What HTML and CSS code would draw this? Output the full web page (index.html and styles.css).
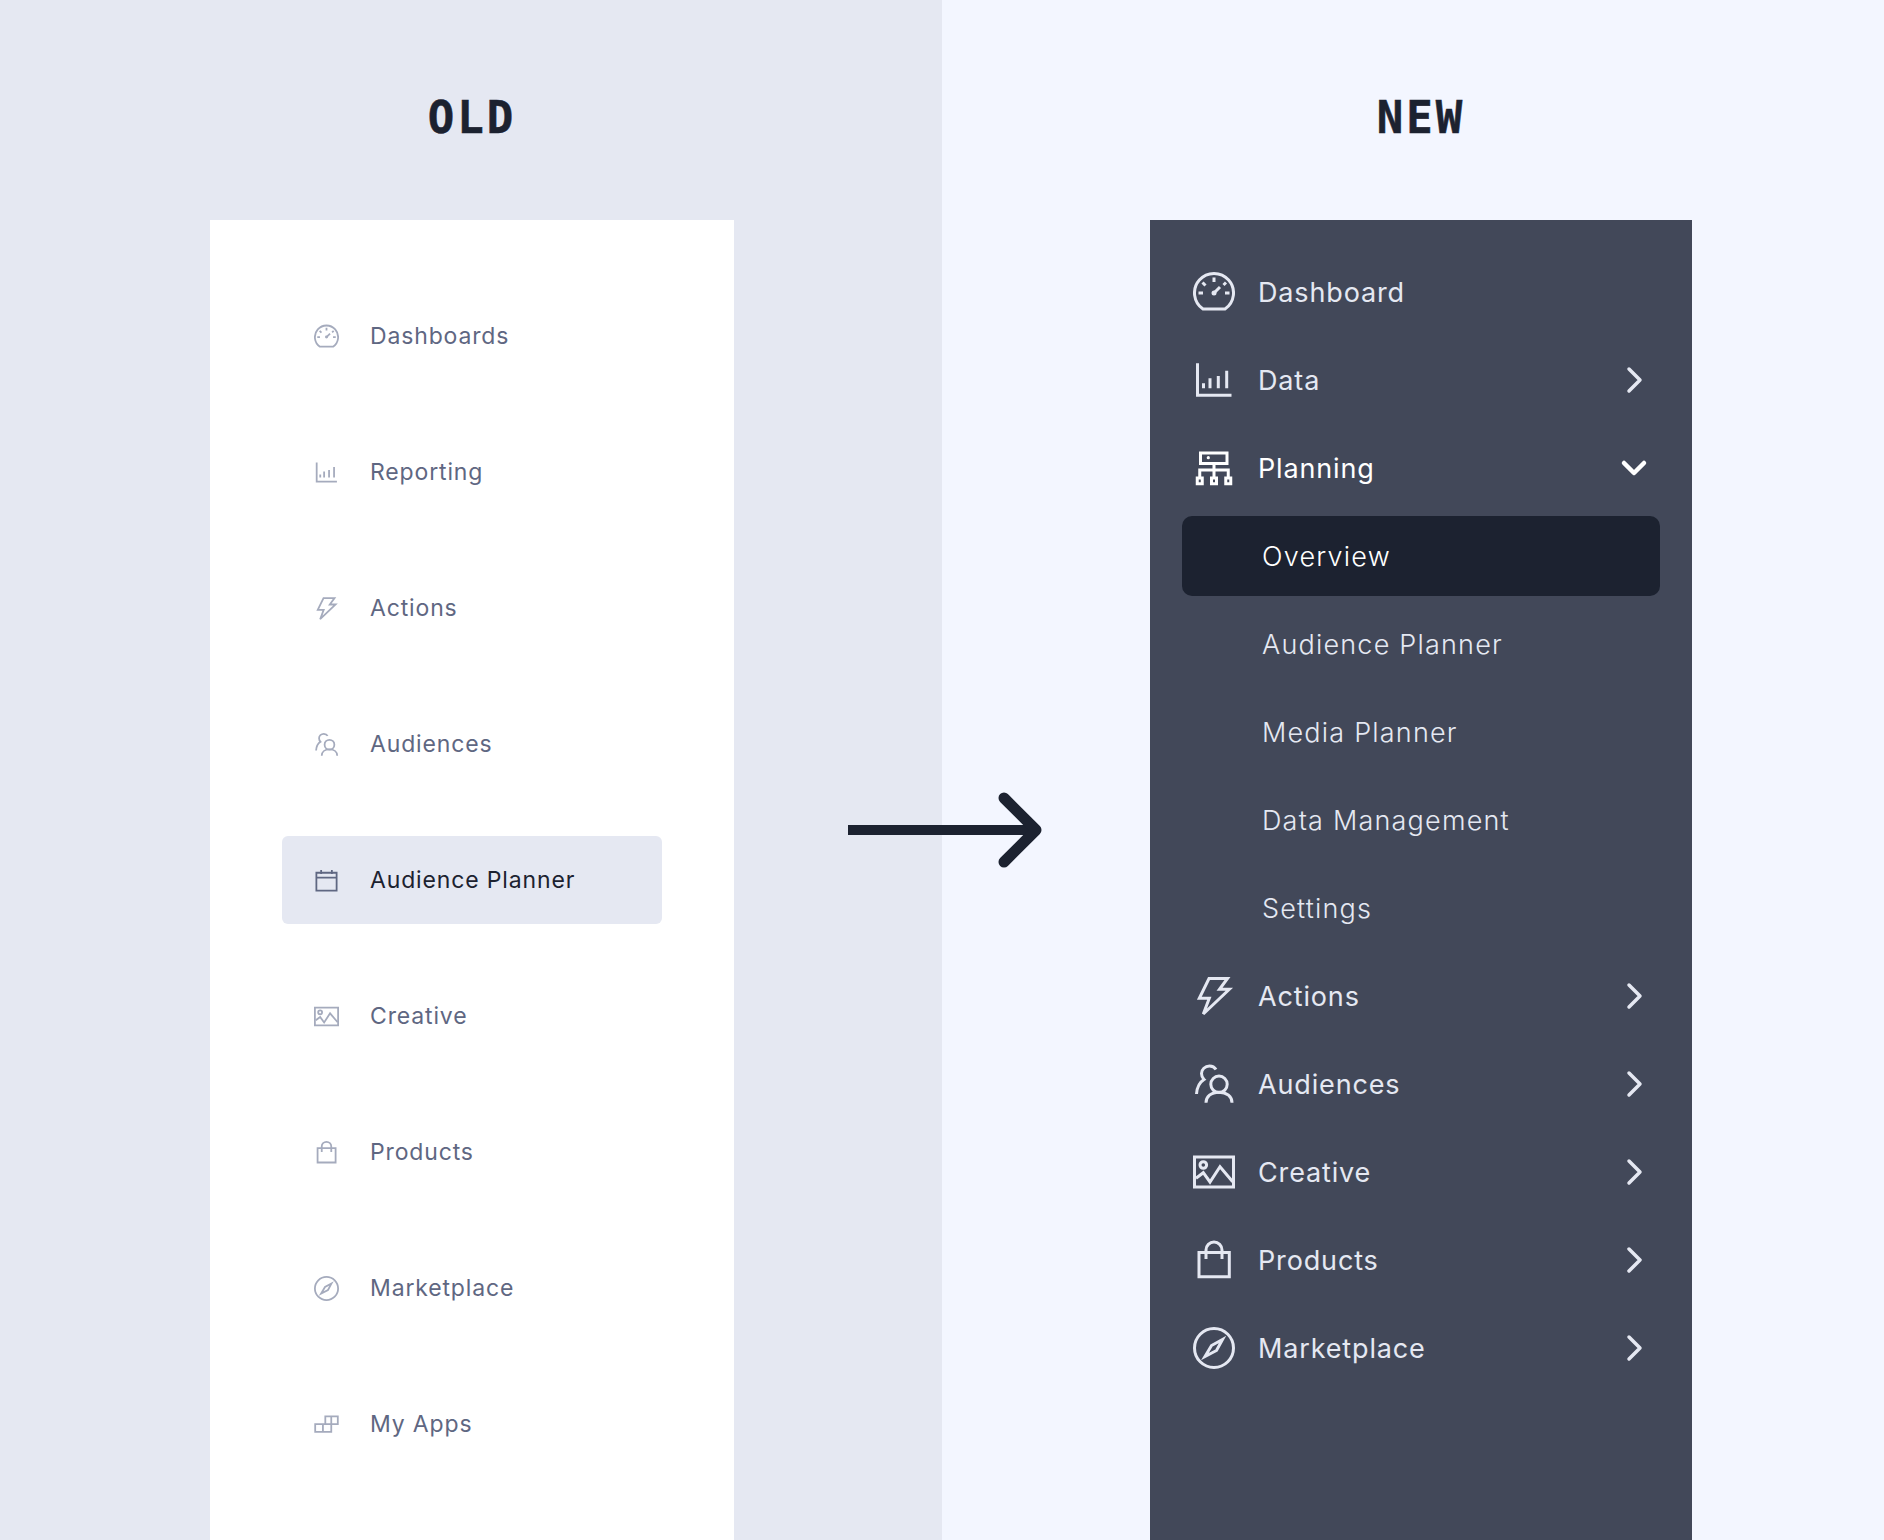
FILE: index.html
```html
<!DOCTYPE html>
<html lang="en">
<head>
    <meta charset="UTF-8">
    <title>Old vs New navigation</title>
    <link rel="stylesheet" href="styles.css">
</head>
<body>
    <svg class="sprite" xmlns="http://www.w3.org/2000/svg">
        <symbol id="i-gauge" viewBox="0 0 42 42">
            <g transform="translate(0 1)">
                <path d="M10 37.1h22a19.5 19.5 0 1 0-22 0z"/>
                <path class="thin" d="M21 5.500v4.500M5.500 21h4.500M32 21h4.500M9.500 10.500l3 3M33 10.500l-2.500 2.500M21 21l6-6"/>
                <circle class="dot" cx="21" cy="21" r="2.500"/>
            </g>
        </symbol>
        <symbol id="i-chart" viewBox="0 0 42 42">
            <path d="M4.500 4.300v32h34"/>
            <path d="M10.500 29.300v-5M17 29.300v-10M25.300 29.300V17M33.700 29.300V11.700"/>
        </symbol>
        <symbol id="i-org" viewBox="0 0 42 42">
            <path class="thin" d="M7.500 6h26.500v10.500H7.500zM21 16.500V31M6.750 31v-8h28.500v8M4.250 31h5v5.750h-5zM18.500 31h5v5.750h-5zM32.750 31h5v5.750h-5z"/>
            <circle class="dot" cx="15.300" cy="10.700" r="1.600"/>
        </symbol>
        <symbol id="i-bolt" viewBox="0 0 42 42">
            <path class="thin" d="M16 3.500h18.500L26.500 14.300h9.800L10.300 39l6-15.700H6.300z"/>
        </symbol>
        <symbol id="i-people" viewBox="0 0 42 42">
            <circle class="thin" cx="26" cy="21.300" r="8.200"/>
            <path class="thin" d="M13 39.700c0-6 5-10.500 13-10.500s13 4.500 13 10.500"/>
            <path class="thin" d="M23 6.500C21.500 4 19 3 16.500 3 12 3 8.500 6.500 8.500 10.500c0 2.500 1 4.500 2.500 6C7 19 4 24 3.500 31"/>
        </symbol>
        <symbol id="i-image" viewBox="0 0 42 42">
            <path d="M1.500 6h39v30h-39z"/>
            <circle class="thin" cx="10.300" cy="14" r="3.300"/>
            <path class="thin" d="M3 27.300l7.300-5.600L17 31l10-15.300L39.700 30.700"/>
        </symbol>
        <symbol id="i-bag" viewBox="0 0 42 42">
            <path d="M6 13.500h30.300v24.300H6zM13 20V11a8 8 0 0 1 16 0v9"/>
        </symbol>
        <symbol id="i-compass" viewBox="0 0 42 42">
            <circle cx="21" cy="21" r="19.500"/>
            <path class="thin" d="M29.500 12.500L23.500 23.500 12 29.500l6.500-11z"/>
        </symbol>
        <symbol id="i-calendar" viewBox="0 0 42 42">
            <path d="M4 8h34v30H4zM4 16h34M12 3.500V10M30 3.500V10"/>
        </symbol>
        <symbol id="i-apps" viewBox="0 0 42 42">
            <path class="thin" d="M19 7.500h21v13H19zM29 7.500v13M2 20.500h27v13H2zM15 20.500v13"/>
        </symbol>
    </svg>

    <section class="panel panel-old">
        <h1 class="panel-title">OLD</h1>
        <nav class="card card-old">
            <a class="old-row"><svg class="old-icon"><use href="#i-gauge"/></svg>Dashboards</a>
            <a class="old-row"><svg class="old-icon"><use href="#i-chart"/></svg>Reporting</a>
            <a class="old-row"><svg class="old-icon"><use href="#i-bolt"/></svg>Actions</a>
            <a class="old-row"><svg class="old-icon"><use href="#i-people"/></svg>Audiences</a>
            <a class="old-row active"><svg class="old-icon"><use href="#i-calendar"/></svg>Audience Planner</a>
            <a class="old-row"><svg class="old-icon"><use href="#i-image"/></svg>Creative</a>
            <a class="old-row"><svg class="old-icon"><use href="#i-bag"/></svg>Products</a>
            <a class="old-row"><svg class="old-icon"><use href="#i-compass"/></svg>Marketplace</a>
            <a class="old-row"><svg class="old-icon"><use href="#i-apps"/></svg>My Apps</a>
        </nav>
    </section>

    <section class="panel panel-new">
        <h1 class="panel-title">NEW</h1>
        <nav class="card card-new">
            <a class="new-row"><svg class="new-icon"><use href="#i-gauge"/></svg><span class="new-label">Dashboard</span></a>
            <a class="new-row"><svg class="new-icon"><use href="#i-chart"/></svg><span class="new-label">Data</span><svg class="chevron" viewBox="0 0 30 30"><path d="M9 4l11 11L9 26"/></svg></a>
            <a class="new-row open"><svg class="new-icon"><use href="#i-org"/></svg><span class="new-label">Planning</span><svg class="chevron" viewBox="0 0 30 30"><path d="M4 10l10 10 10-10"/></svg></a>
            <a class="sub-row current">Overview</a>
            <a class="sub-row">Audience Planner</a>
            <a class="sub-row">Media Planner</a>
            <a class="sub-row">Data Management</a>
            <a class="sub-row">Settings</a>
            <a class="new-row"><svg class="new-icon"><use href="#i-bolt"/></svg><span class="new-label">Actions</span><svg class="chevron" viewBox="0 0 30 30"><path d="M9 4l11 11L9 26"/></svg></a>
            <a class="new-row"><svg class="new-icon"><use href="#i-people"/></svg><span class="new-label">Audiences</span><svg class="chevron" viewBox="0 0 30 30"><path d="M9 4l11 11L9 26"/></svg></a>
            <a class="new-row"><svg class="new-icon"><use href="#i-image"/></svg><span class="new-label">Creative</span><svg class="chevron" viewBox="0 0 30 30"><path d="M9 4l11 11L9 26"/></svg></a>
            <a class="new-row"><svg class="new-icon"><use href="#i-bag"/></svg><span class="new-label">Products</span><svg class="chevron" viewBox="0 0 30 30"><path d="M9 4l11 11L9 26"/></svg></a>
            <a class="new-row"><svg class="new-icon"><use href="#i-compass"/></svg><span class="new-label">Marketplace</span><svg class="chevron" viewBox="0 0 30 30"><path d="M9 4l11 11L9 26"/></svg></a>
        </nav>
    </section>

    <svg class="arrow" viewBox="0 0 200 80"><path d="M0 40h184"/><path class="arrow-head" d="M156 8l32 32-32 32"/></svg>
</body>
</html>
```

FILE: styles.css
```css
* {
    box-sizing: border-box;
}

body {
    display: flex;
    height: 100vh;
    margin: 0;
    overflow: hidden;
    font-family: Inter, 'Noto Sans', sans-serif;
}

.sprite {
    display: none;
}

.panel {
    display: flex;
    flex-direction: column;
    align-items: center;
    width: 50%;
}

.panel-old {
    padding-left: 2px;
    background-color: #E5E8F2;
}

.panel-new {
    padding-left: 16px;
    background-color: #F3F6FF;
}

.panel-title {
    height: 220px;
    margin: 0;
    padding-top: 88px;
    font-family: 'DejaVu Sans Mono', monospace;
    font-size: 44px;
    font-weight: bold;
    line-height: 60px;
    letter-spacing: 3px;
    color: #1C2230;
    -webkit-text-stroke: 0.5px #1C2230;
}

.card {
    display: flex;
    flex-direction: column;
    flex: 1;
}

/* old sidebar */
.card-old {
    width: 524px;
    padding: 72px;
    gap: 48px;
    background-color: #fff;
}

.old-row {
    display: flex;
    flex: none;
    align-items: center;
    gap: 31px;
    height: 88px;
    padding-left: 32px;
    border-radius: 6px;
    font-size: 23px;
    letter-spacing: 0.85px;
    color: #5F6782;
}

.old-row.active {
    background-color: #E5E8F2;
    color: #1C2230;
}

.old-icon {
    flex: none;
    width: 25px;
    height: 25px;
    fill: none;
    stroke: #A5ABBD;
    stroke-width: 3;
    color: #A5ABBD;
}

.old-icon .thin {
    stroke-width: 2.5;
}

.old-row.active .old-icon {
    stroke: #5F6782;
}

/* new sidebar */
.card-new {
    width: 542px;
    padding: 32px;
    gap: 8px;
    background-color: #424859;
}

.new-row,
.sub-row {
    display: flex;
    flex: none;
    align-items: center;
    height: 80px;
    font-size: 27px;
    color: #E5E8F2;
}

.new-row {
    gap: 23px;
    padding: 0 10px 0 11px;
    letter-spacing: 0.85px;
}

.new-row.open {
    color: #fff;
}

.new-label {
    flex: 1;
}

.new-icon {
    flex: none;
    width: 42px;
    height: 42px;
    fill: none;
    stroke: currentColor;
    stroke-width: 3;
}

.new-icon .thin {
    stroke-width: 2.5;
}

.dot {
    fill: currentColor;
    stroke: none;
}

.chevron {
    flex: none;
    width: 30px;
    height: 30px;
    fill: none;
    stroke: currentColor;
    stroke-width: 3.5;
    stroke-linecap: round;
    stroke-linejoin: round;
}

.new-row.open .chevron {
    stroke-width: 4.5;
}

.sub-row {
    padding-left: 80px;
    font-weight: 300;
    letter-spacing: 1.2px;
}

.sub-row.current {
    border-radius: 10px;
    background-color: #1C2230;
    color: #fff;
}

.arrow {
    position: absolute;
    top: 790px;
    left: 848px;
    width: 200px;
    height: 80px;
    fill: none;
    stroke: #1C2230;
    stroke-width: 10;
}

.arrow-head {
    stroke-width: 11;
    stroke-linecap: round;
    stroke-linejoin: round;
}
```
